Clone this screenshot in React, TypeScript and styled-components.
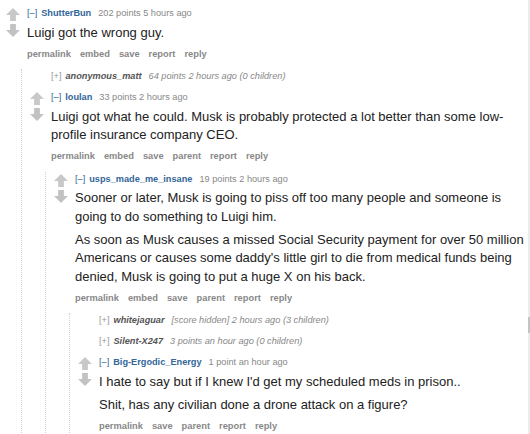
import React from "react";
import styled, { createGlobalStyle, css } from "styled-components";

const GlobalStyle = createGlobalStyle`
  html, body { margin: 0; padding: 0; background: #fff; }
  body { font-family: "Liberation Sans", Arial, sans-serif; overflow: hidden; }
`;

type CommentData = {
  author: string;
  meta: string;
  collapsed?: boolean;
  body?: string[];
  buttons?: string[];
  children?: CommentData[];
};

const fullButtons = ["permalink", "embed", "save", "parent", "report", "reply"];

const data: CommentData = {
  author: "ShutterBun",
  meta: "202 points 5 hours ago",
  body: ["Luigi got the wrong guy."],
  buttons: ["permalink", "embed", "save", "report", "reply"],
  children: [
    { author: "anonymous_matt", meta: "64 points 2 hours ago (0 children)", collapsed: true },
    {
      author: "loulan",
      meta: "33 points 2 hours ago",
      body: [
        "Luigi got what he could. Musk is probably protected a lot better than some low-profile insurance company CEO.",
      ],
      buttons: fullButtons,
      children: [
        {
          author: "usps_made_me_insane",
          meta: "19 points 2 hours ago",
          body: [
            "Sooner or later, Musk is going to piss off too many people and someone is going to do something to Luigi him.",
            "As soon as Musk causes a missed Social Security payment for over 50 million Americans or causes some daddy's little girl to die from medical funds being denied, Musk is going to put a huge X on his back.",
          ],
          buttons: fullButtons,
          children: [
            { author: "whitejaguar", meta: "[score hidden] 2 hours ago (3 children)", collapsed: true },
            { author: "Silent-X247", meta: "3 points an hour ago (0 children)", collapsed: true },
            {
              author: "Big-Ergodic_Energy",
              meta: "1 point an hour ago",
              body: [
                "I hate to say but if I knew I'd get my scheduled meds in prison..",
                "Shit, has any civilian done a drone attack on a figure?",
              ],
              buttons: ["permalink", "save", "parent", "report", "reply"],
            },
          ],
        },
      ],
    },
  ],
};

const Page = styled.div`
  position: relative;
  box-sizing: border-box;
  width: 530px;
  height: 434px;
  overflow: hidden;
  padding: 6px 2px 0 6px;
`;

const ScrollTrack = styled.div`
  position: absolute;
  top: 0;
  right: 0;
  width: 2px;
  height: 100%;
  background: #ececec;
`;

const ScrollThumb = styled.div`
  position: absolute;
  top: 317px;
  left: 0;
  width: 2px;
  height: 16px;
  background: #c4c4c4;
`;

const CommentBox = styled.div`
  display: flex;
  flex-direction: column;
  & + & {
    margin-top: 7px;
  }
`;

const Row = styled.div`
  display: flex;
  align-items: flex-start;
`;

const Midcol = styled.div`
  flex: none;
  width: 21px;
  display: flex;
  flex-direction: column;
  gap: 3px;
  padding-top: 2px;
`;

const Entry = styled.div`
  flex: 1;
  min-width: 0;
`;

const Tagline = styled.div<{ $collapsed?: boolean }>`
  font-size: 9.2px;
  line-height: 14px;
  color: #888;
  white-space: nowrap;
  ${(p) =>
    p.$collapsed &&
    css`
      font-style: italic;
    `}
`;

const Expand = styled.span<{ $collapsed?: boolean }>`
  color: ${(p) => (p.$collapsed ? "#999" : "#369")};
  font-style: normal;
  margin-right: 4px;
`;

const Author = styled.span<{ $collapsed?: boolean }>`
  font-weight: bold;
  color: ${(p) => (p.$collapsed ? "#555" : "#369")};
  margin-right: 7px;
`;

const Meta = styled.span`
  color: #888;
`;

const Md = styled.div`
  margin-top: 3.5px;
  color: #222;
  font-size: 13px;
  line-height: 18.4px;
`;

const Para = styled.p`
  margin: 0 0 4.8px;
`;

const Buttons = styled.ul`
  display: flex;
  gap: 9px;
  margin: 0;
  padding: 0;
  list-style: none;
  font-size: 9.3px;
  line-height: 14px;
  font-weight: bold;
  color: #888;
`;

const Child = styled.div`
  margin-left: 15px;
  margin-top: 8.5px;
  border-left: 1px dotted #ccd;
  padding-left: 8px;
`;

const ArrowSvg = styled.svg`
  display: block;
  width: 14px;
  height: 13px;
`;

const Arrow: React.FC<{ down?: boolean }> = ({ down }) => (
  <ArrowSvg viewBox="0 0 15 14">
    <path
      d="M7.5 0 L15 7.5 L10.6 7.5 L10.6 14 L4.4 14 L4.4 7.5 L0 7.5 Z"
      fill={down ? "#c2c2c2" : "#c8c8c8"}
      transform={down ? "rotate(180 7.5 7)" : undefined}
    />
  </ArrowSvg>
);

const Comment: React.FC<{ c: CommentData }> = ({ c }) => (
  <CommentBox>
    <Row>
      <Midcol>
        {!c.collapsed && (
          <>
            <Arrow />
            <Arrow down />
          </>
        )}
      </Midcol>
      <Entry>
        <Tagline $collapsed={c.collapsed}>
          <Expand $collapsed={c.collapsed}>{c.collapsed ? "[+]" : "[–]"}</Expand>
          <Author $collapsed={c.collapsed}>{c.author}</Author>
          <Meta>{c.meta}</Meta>
        </Tagline>
        {c.body && (
          <Md>
            {c.body.map((p, i) => (
              <Para key={i}>{p}</Para>
            ))}
          </Md>
        )}
        {c.buttons && (
          <Buttons>
            {c.buttons.map((b) => (
              <li key={b}>{b}</li>
            ))}
          </Buttons>
        )}
      </Entry>
    </Row>
    {c.children && (
      <Child>
        {c.children.map((ch) => (
          <Comment key={ch.author} c={ch} />
        ))}
      </Child>
    )}
  </CommentBox>
);

export default function App() {
  return (
    <>
      <GlobalStyle />
      <Page>
        <Comment c={data} />
        <ScrollTrack>
          <ScrollThumb />
        </ScrollTrack>
      </Page>
    </>
  );
}
